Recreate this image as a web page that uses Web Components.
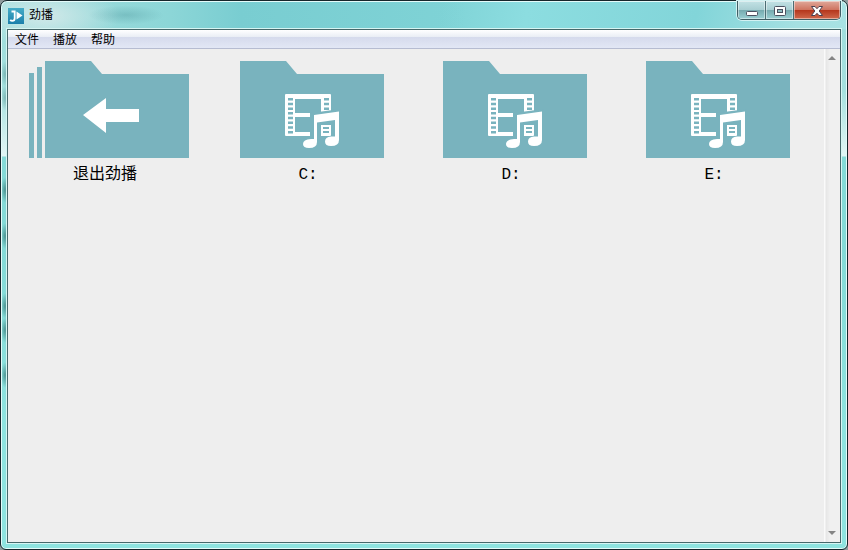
<!DOCTYPE html>
<html lang="zh-CN">
<head>
<meta charset="utf-8">
<title>劲播</title>
<style>
    body {
        margin: 0;
        background: #8f9a9c;
        font-family: "Liberation Sans", "Noto Sans CJK SC", sans-serif;
        font-size: 12px;
        color: #000;
    }
</style>
</head>
<body>
<player-window>
    <title-bar slot="title">劲播</title-bar>
    <menu-bar slot="menu">
        <menu-entry>文件</menu-entry>
        <menu-entry>播放</menu-entry>
        <menu-entry>帮助</menu-entry>
    </menu-bar>
    <folder-tile kind="exit">退出劲播</folder-tile>
    <folder-tile>C:</folder-tile>
    <folder-tile>D:</folder-tile>
    <folder-tile>E:</folder-tile>
</player-window>

<script>
function render(host, html) {
    const template = document.createElement('template');
    template.innerHTML = html;
    host.attachShadow({mode: 'open'}).appendChild(template.content.cloneNode(true));
}

// 窗口外框
class PlayerWindow extends HTMLElement {
    constructor() {
        super();
        render(this, `
            <style>
                :host {
                    --smudge: radial-gradient(ellipse, rgba(30, 90, 90, .55), transparent 70%);
                    --smudge-light: radial-gradient(ellipse, rgba(60, 120, 120, .4), transparent 70%);
                    display: flex;
                    flex-direction: column;
                    box-sizing: border-box;
                    height: 100vh;
                    padding: 0 6px 6px;
                    border: 1px solid #16262b;
                    border-radius: 7px 7px 6px 6px;
                    box-shadow: inset 0 0 0 1px #e4fbfa;
                    background:
                        var(--smudge) 0 176px / 8px 26px no-repeat,
                        var(--smudge) 0 222px / 8px 26px no-repeat,
                        var(--smudge) 0 292px / 8px 26px no-repeat,
                        var(--smudge) 0 316px / 8px 26px no-repeat,
                        var(--smudge) 0 361px / 8px 26px no-repeat,
                        var(--smudge-light) 0 60px / 8px 26px no-repeat,
                        var(--smudge-light) 0 84px / 8px 26px no-repeat,
                        radial-gradient(ellipse, rgba(60, 135, 142, .3), transparent 68%) 86px 4px / 78px 20px no-repeat,
                        radial-gradient(ellipse, rgba(214, 234, 234, .9), transparent 70%) -30px -16px / 150px 62px no-repeat,
                        linear-gradient(90deg, #a5dfdf 0, #97d9da 90px, #8cd6d7 170px, #79cdd1 240px, transparent 55%) 0 0 / 100% 28px no-repeat,
                        linear-gradient(100deg, #7fd3d6 0 52%, #8cdde0 62%, #82d5d9 82%, #a5e0e2 94%, #a8e2e3) 0 0 / 100% 28px no-repeat,
                        linear-gradient(#a0dedd 28px, #a5e0de 90px, #e2f6f5 155px, #84dad7 156px, #84dad7 250px, #8ee3df 420px);
                }

                .client {
                    flex: 1;
                    min-height: 0;
                    display: flex;
                    flex-direction: column;
                    border: 1px solid #46686a;
                    outline: 1px solid #d6f5f3;
                    background: #eee;
                }

                .body {
                    flex: 1;
                    min-height: 0;
                    display: flex;
                }

                main {
                    flex: 1;
                    display: grid;
                    grid-template-columns: repeat(auto-fill, 203px);
                    align-content: start;
                }
            </style>
            <slot name="title"></slot>
            <div class="client">
                <slot name="menu"></slot>
                <div class="body">
                    <main><slot></slot></main>
                    <scroll-rail></scroll-rail>
                </div>
            </div>
        `);
    }
}

// 标题栏
class TitleBar extends HTMLElement {
    constructor() {
        super();
        render(this, `
            <style>
                :host {
                    display: flex;
                    align-items: flex-start;
                    height: 28px;
                    padding-left: 1px;
                }

                .logo {
                    width: 16px;
                    height: 16px;
                    margin-top: 7px;
                }

                h1 {
                    flex: 1;
                    margin: 5px 0 0 5px;
                    font-size: 12px;
                    font-weight: normal;
                    line-height: 18px;
                }

                .controls {
                    display: flex;
                    border: 1px solid #3f5f65;
                    border-top: 0;
                    border-radius: 0 0 5px 5px;
                    box-shadow: 0 0 0 1px #d3f2f3;
                    overflow: hidden;
                }

                button {
                    display: flex;
                    align-items: center;
                    justify-content: center;
                    width: 28px;
                    height: 18px;
                    padding: 0;
                    border: 0;
                    border-right: 1px solid #4b6d73;
                    box-shadow: inset 0 0 0 1px rgba(255, 255, 255, .45);
                    background: linear-gradient(#c3e2e5, #a9cfd3 48%, #75a9ae 50%, #9ad0d3);
                }

                .close {
                    width: 46px;
                    border-right: 0;
                    background: linear-gradient(#e0a99b, #cf7561 48%, #b4351b 50%, #d0694c);
                }
            </style>
            <svg class="logo" viewBox="0 0 16 16" aria-hidden="true">
                <defs>
                    <linearGradient id="g" x1="0" y1="0" x2="0" y2="1">
                        <stop offset="0" stop-color="#45acc7"/>
                        <stop offset="1" stop-color="#1b7fab"/>
                    </linearGradient>
                </defs>
                <rect width="16" height="16" fill="url(#g)"/>
                <path d="M3.500 3.500H6.700V10.200Q6.700 12.900 4.300 12.900Q3 12.900 2.200 11.900" fill="none" stroke="#fff" stroke-width="1.800"/>
                <path d="M8.500 3.500L14.500 7.500L8.500 11.500Z" fill="#fff"/>
            </svg>
            <h1><slot></slot></h1>
            <div class="controls">
                <button aria-label="最小化">
                    <svg width="14" height="14" viewBox="0 0 14 14"><rect x="1.500" y="8.500" width="11" height="4" rx="1" fill="#fff" stroke="#4b5160"/></svg>
                </button>
                <button aria-label="最大化">
                    <svg width="14" height="14" viewBox="0 0 14 14">
                        <rect x="1.500" y="3.500" width="11" height="9" rx="1" fill="#fff" stroke="#4b5160"/>
                        <rect x="4.500" y="6.500" width="5" height="3" fill="#8fbdc1" stroke="#4b5160"/>
                    </svg>
                </button>
                <button class="close" aria-label="关闭">
                    <svg width="14" height="14" viewBox="0 0 14 14"><path d="M1.500 3.500H5L7 5.700L9 3.500H12.500L9.200 8L12.500 12.500H9L7 10.300L5 12.500H1.500L4.800 8Z" fill="#fff" stroke="#4b4150"/></svg>
                </button>
            </div>
        `);
    }
}

// 菜单栏
class MenuBar extends HTMLElement {
    constructor() {
        super();
        render(this, `
            <style>
                :host {
                    display: block;
                    border-bottom: 1px solid #b6bcd1;
                    background: linear-gradient(#fff, #e9edf5 7px, #d5daec 7px, #e2e7f5);
                }

                nav {
                    display: flex;
                    height: 18px;
                }
            </style>
            <nav><slot></slot></nav>
        `);
    }
}

class MenuEntry extends HTMLElement {
    constructor() {
        super();
        render(this, `
            <style>
                :host {
                    display: flex;
                }

                button {
                    padding: 2px 7px 0;
                    border: 0;
                    background: none;
                    color: inherit;
                    font: inherit;
                    line-height: 16px;
                }
            </style>
            <button><slot></slot></button>
        `);
    }
}

// 右侧滚动条
class ScrollRail extends HTMLElement {
    constructor() {
        super();
        render(this, `
            <style>
                :host {
                    display: flex;
                    flex-direction: column;
                    justify-content: space-between;
                    width: 16px;
                    background: linear-gradient(90deg, #fafafa 1px, #e6e6e6 2px, #f0f0f0 6px, #f0f0f0);
                }

                button {
                    display: flex;
                    align-items: center;
                    justify-content: center;
                    height: 18px;
                    padding: 0;
                    border: 0;
                    background: none;
                }
            </style>
            <button aria-label="向上滚动"><svg width="8" height="4" viewBox="0 0 8 4"><path d="M4 0L8 4H0Z" fill="#858585"/></svg></button>
            <button aria-label="向下滚动"><svg width="8" height="4" viewBox="0 0 8 4"><path d="M0 0H8L4 4Z" fill="#858585"/></svg></button>
        `);
    }
}

const exitIcon = `
    <path d="M0 12H5V97H0ZM8 6H13V97H8ZM16 0H62L73 13H160V97H16Z" fill="#79b3be"/>
    <path d="M54 54L77 37V48H110V61H77V72Z" fill="#fff"/>
`;

// 胶片与音符
const mediaIcon = `
    <path d="M8 0H54L65 13H152V97H8Z" fill="#79b3be"/>
    <path d="M54 33H98Q99 33 99 34V74Q99 75 98 75H54Q53 75 53 74V34Q53 33 54 33Z" fill="#fff"/>
    <path d="M63 38H89V52H63ZM63 56H89V71H63Z" fill="#79b3be"/>
    <path d="M58.500 37V74M94.500 37V74" stroke="#79b3be" stroke-width="5" stroke-dasharray="2.500 2.200"/>
    <path d="M78 52L109 48V88H78Z" fill="#79b3be"/>
    <path d="M89 64H99V74Q99 75 98 75H89Z" fill="#fff"/>
    <path d="M91 67H97M91 71H97" stroke="#79b3be" stroke-width="2"/>
    <path d="M82 54L107 50.500V79Q107 85 99 85Q93 85 93 80.500Q93 76 99 75.500H103V59L85 61.500V81Q85 87 77 87Q71 87 71 83Q71 78.500 79 78H82Z" fill="#fff"/>
`;

// 文件夹图块
class FolderTile extends HTMLElement {
    constructor() {
        super();
        const icon = this.getAttribute('kind') === 'exit' ? exitIcon : mediaIcon;
        render(this, `
            <style>
                :host {
                    display: block;
                    padding: 12px 21px 0;
                }

                button {
                    display: block;
                    padding: 0;
                    border: 0;
                    background: none;
                    color: inherit;
                    text-align: center;
                }

                svg {
                    display: block;
                    width: 160px;
                    height: 97px;
                }

                span {
                    display: block;
                    padding: 5px 8px 0 0;
                    font: 16px/24px "Liberation Mono", "Noto Sans CJK SC", monospace;
                }
            </style>
            <button>
                <svg viewBox="0 0 160 97" aria-hidden="true">${icon}</svg>
                <span><slot></slot></span>
            </button>
        `);
    }
}

customElements.define('scroll-rail', ScrollRail);
customElements.define('menu-entry', MenuEntry);
customElements.define('menu-bar', MenuBar);
customElements.define('title-bar', TitleBar);
customElements.define('folder-tile', FolderTile);
customElements.define('player-window', PlayerWindow);
</script>
</body>
</html>
